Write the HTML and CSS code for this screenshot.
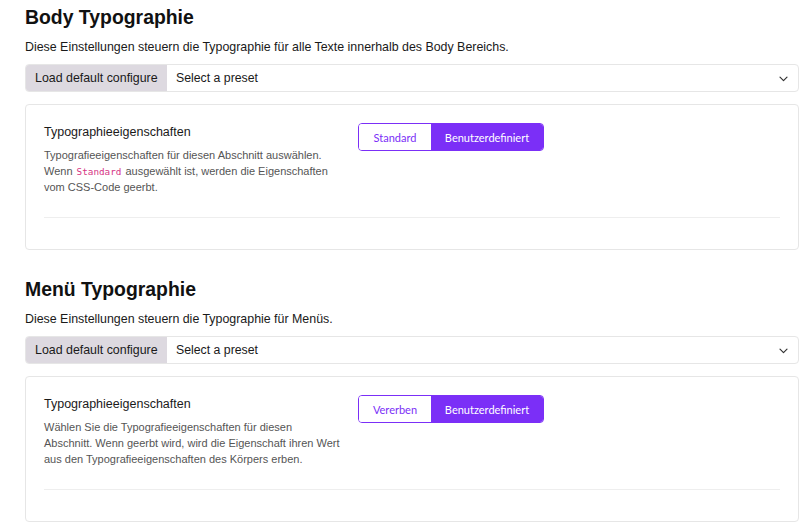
FILE: index.html
```html
<!DOCTYPE html>
<html lang="de">
<head>
<meta charset="utf-8">
<link rel="stylesheet" href="styles.css">
</head>
<body>
<main class="page">
  <section class="section">
    <h2 class="title">Body Typographie</h2>
    <p class="subtitle">Diese Einstellungen steuern die Typographie für alle Texte innerhalb des Body Bereichs.</p>
    <div class="input-group">
      <button class="load-btn">Load default configure</button>
      <div class="select">
        <span>Select a preset</span>
        <svg class="chev" width="9" height="6" viewBox="0 0 9 6"><path d="M1 1.2l3.5 3.5 3.5-3.5" fill="none" stroke="#333" stroke-width="1.2" stroke-linecap="round" stroke-linejoin="round"/></svg>
      </div>
    </div>
    <div class="card">
      <div class="row">
        <div class="info">
          <div class="label">Typographieeigenschaften</div>
          <p class="desc">Typografieeigenschaften für diesen Abschnitt auswählen. Wenn <code>Standard</code> ausgewählt ist, werden die Eigenschaften vom CSS-Code geerbt.</p>
        </div>
        <div class="toggle">
          <span class="opt opt-left">Standard</span>
          <span class="opt opt-active">Benutzerdefiniert</span>
        </div>
      </div>
    </div>
  </section>
  <section class="section">
    <h2 class="title">Menü Typographie</h2>
    <p class="subtitle">Diese Einstellungen steuern die Typographie für Menüs.</p>
    <div class="input-group">
      <button class="load-btn">Load default configure</button>
      <div class="select">
        <span>Select a preset</span>
        <svg class="chev" width="9" height="6" viewBox="0 0 9 6"><path d="M1 1.2l3.5 3.5 3.5-3.5" fill="none" stroke="#333" stroke-width="1.2" stroke-linecap="round" stroke-linejoin="round"/></svg>
      </div>
    </div>
    <div class="card">
      <div class="row">
        <div class="info">
          <div class="label">Typographieeigenschaften</div>
          <p class="desc">Wählen Sie die Typografieeigenschaften für diesen Abschnitt. Wenn geerbt wird, wird die Eigenschaft ihren Wert aus den Typografieeigenschaften des Körpers erben.</p>
        </div>
        <div class="toggle">
          <span class="opt opt-left">Vererben</span>
          <span class="opt opt-active">Benutzerdefiniert</span>
        </div>
      </div>
    </div>
  </section>
</main>
</body>
</html>
```

FILE: styles.css
```css
* { box-sizing: border-box; }
html, body { margin: 0; padding: 0; background: #fff; }
body {
  font-family: "Liberation Sans", Arial, sans-serif;
  color: #1a1a1a;
}
.page {
  padding: 5px 1px 0 25px;
}
.section { margin-bottom: 27px; }
.title {
  margin: 0;
  font-size: 19.4px;
  line-height: 24px;
  font-weight: 700;
  color: #111;
}
.subtitle {
  margin: 9px 0 0;
  font-size: 12.4px;
  line-height: 18px;
  color: #1a1a1a;
}
.input-group {
  margin-top: 8px;
  display: flex;
  height: 28px;
  border: 1px solid #e6e6e6;
  border-radius: 4px;
  overflow: hidden;
}
.load-btn {
  border: 0;
  margin: 0;
  background: #ddd9e0;
  font-family: inherit;
  font-size: 12.4px;
  color: #1a1a1a;
  padding: 0 9px;
  width: 141px;
  text-align: left;
  white-space: nowrap;
}
.select {
  flex: 1;
  display: flex;
  align-items: center;
  justify-content: space-between;
  padding: 0 10px 0 9px;
  font-size: 12.3px;
  color: #1a1a1a;
}
.chev { margin-top: 1px; }
.card {
  margin-top: 12px;
  border: 1px solid #e6e6e6;
  border-radius: 4px;
  padding: 18px 18px 31px 18px;
}
.row {
  display: flex;
  gap: 16px;
  border-bottom: 1px solid #eeeeee;
  padding-bottom: 22px;
}
.info { width: 298px; flex: none; }
.label {
  font-size: 12.5px;
  line-height: 16px;
  margin-top: 1px;
  color: #1a1a1a;
}
.desc {
  margin: 7px 0 0;
  font-size: 11px;
  line-height: 16px;
  color: #555;
}
.desc code {
  font-family: "DejaVu Sans Mono", "Liberation Mono", monospace;
  font-size: 9.3px;
  line-height: 1;
  margin: 0 1px;
  color: #d63384;
}
.toggle {
  display: flex;
  height: 28px;
  border: 1px solid #7b2ff7;
  border-radius: 4px;
  overflow: hidden;
  font-family: Lato, Inter, sans-serif;
  font-size: 11px;
}
.opt {
  display: flex;
  align-items: center;
  justify-content: center;
}
.opt-left {
  width: 72px;
  color: #7b2ff7;
  background: #fff;
}
.opt-active {
  width: 112px;
  background: #7b2ff7;
  color: #fff;
}
```
